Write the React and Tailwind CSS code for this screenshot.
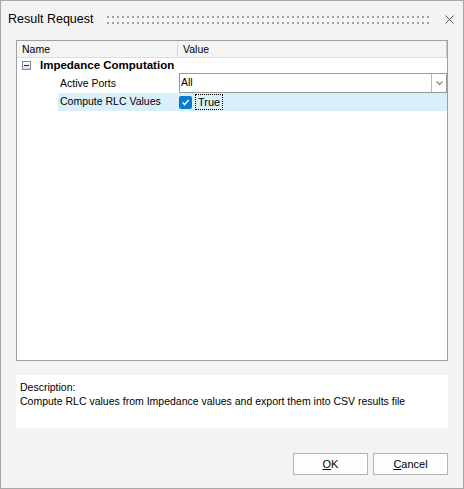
import React from 'react';

const font = { fontFamily: '"Liberation Sans", Arial, sans-serif' };

const TitleDots = () => (
    <svg className="flex-1 h-[10px]" preserveAspectRatio="none">
        <defs>
            <pattern id="grip" width="5" height="10" patternUnits="userSpaceOnUse">
                <rect x="0" y="1" width="2" height="2" fill="#a3a3a3" />
                <rect x="0" y="7" width="2" height="2" fill="#a3a3a3" />
            </pattern>
        </defs>
        <rect width="100%" height="10" fill="url(#grip)" />
    </svg>
);

const Expander = () => (
    <div className="w-[9px] h-[9px] border border-[#7b8b9c] bg-gradient-to-b from-white to-[#d8dde4] flex items-center justify-center">
        <div className="w-[5px] h-[1px] bg-[#1f2c3c]" />
    </div>
);

const CheckBox = () => (
    <div className="w-[13px] h-[13px] bg-[#0a7bd4] rounded-[2px] flex items-center justify-center">
        <svg width="9" height="9" viewBox="0 0 9 9">
            <path d="M1.5 4.5 L3.6 6.6 L7.6 2" stroke="white" strokeWidth="1.4" fill="none" />
        </svg>
    </div>
);

const App = () => {
    return (
        <div className="w-[464px] h-[489px] border border-[#a8a8a8] bg-[#f3f3f3] flex flex-col text-[10.5px] text-black" style={font}>
            {/* title bar */}
            <div className="h-[39px] flex items-center pl-[7px] pr-[9px] pb-[2px]">
                <span className="text-[12.5px] mr-[14px]">Result Request</span>
                <TitleDots />
                <svg className="ml-[13px]" width="9" height="9" viewBox="0 0 9 9">
                    <path d="M0.5 0.5 L8.5 8.5 M8.5 0.5 L0.5 8.5" stroke="#555" strokeWidth="1" />
                </svg>
            </div>

            {/* property grid */}
            <div className="mx-[15px] h-[321px] border border-[#a0a0a0] bg-white flex flex-col">
                <div className="h-[17px] flex bg-[#f4f4f4] border-b border-[#dcdcdc] border-r border-r-[#c8c8c8]">
                    <div className="w-[161px] border-r border-[#d6d6d6] pl-[5px] leading-[16px]">Name</div>
                    <div className="pl-[5px] leading-[16px]">Value</div>
                </div>
                <div className="h-[15px] flex items-center pl-[5px]">
                    <Expander />
                    <span className="ml-[9px] font-bold text-[11.5px] leading-[15px]">Impedance Computation</span>
                </div>
                <div className="h-[20px] flex">
                    <div className="w-[162px] pl-[43px] flex items-center pt-[2px]">Active Ports</div>
                    <div className="flex-1 flex border border-[#9a9a9a]">
                        <div className="flex-1 pl-[1px] flex items-center">All</div>
                        <div className="w-[15px] border-l border-[#b8b8b8] flex items-center justify-center">
                            <svg width="7" height="5" viewBox="0 0 7 5">
                                <path d="M0.5 0.5 L3.5 3.5 L6.5 0.5" stroke="#8a8a8a" strokeWidth="1.3" fill="none" />
                            </svg>
                        </div>
                    </div>
                </div>
                <div className="h-[18px] flex">
                    <div className="w-[41px]" />
                    <div className="flex-1 flex bg-[#d9f0fa]">
                        <div className="w-[121px] pl-[2px] flex items-center">Compute RLC Values</div>
                        <div className="flex items-center">
                            <CheckBox />
                            <span className="ml-[3px] px-[2px] h-[16px] leading-[14px] border border-dotted border-black text-[11px]">True</span>
                        </div>
                    </div>
                </div>
            </div>

            {/* description */}
            <div className="mt-[14px] mx-[15px] h-[53px] bg-white pl-[4px] pt-[5px] leading-[14px]">
                <div>Description:</div>
                <div>Compute RLC values from Impedance values and export them into CSV results file</div>
            </div>

            {/* buttons */}
            <div className="mt-[25px] mr-[15px] flex justify-end gap-[5px]">
                <button className="w-[75px] h-[22px] bg-[#fdfdfd] border border-[#b4b4b4] text-[11px]">
                    <span className="underline">O</span>K
                </button>
                <button className="w-[75px] h-[22px] bg-[#fdfdfd] border border-[#b4b4b4] text-[11px]">
                    <span className="underline">C</span>ancel
                </button>
            </div>
        </div>
    );
};

export default App;
